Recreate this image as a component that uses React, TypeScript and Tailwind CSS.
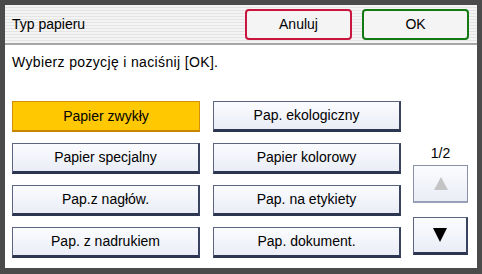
import React from "react";

const font = { fontFamily: '"Liberation Sans", Arial, sans-serif' };

function Btn({ label, active }: { label: string; active?: boolean }) {
  return (
    <div
      className={
        active
          ? "h-[31px] w-[188px] flex items-center justify-center text-[14px] text-black bg-[#ffc800] border border-[#d4900a] border-b-[2px] border-b-[#c98400]"
          : "h-[31px] w-[188px] flex items-center justify-center text-[14px] text-black bg-[linear-gradient(#fbfcff,#eaedf6)] border border-[#5b6480] border-b-[3px] border-b-[#2c3650] border-r-[2px] border-r-[#39425e]"
      }
    >
      {label}
    </div>
  );
}

export default function App() {
  return (
    <div style={font} className="w-[482px] h-[274px] bg-[#4b4b4b] pt-[5px] pl-[5px] pr-[5px] pb-[6px]">
      <div className="flex flex-col h-full bg-white">
        <div className="h-[38px] flex items-start pt-[4px] pl-[7px] pr-[8px] bg-[repeating-linear-gradient(#f4f4f4_0px,#f4f4f4_2px,#e4e4e4_2px,#e4e4e4_3px)]">
          <span className="text-[14px] text-black leading-[31px]">Typ papieru</span>
          <div className="ml-auto flex gap-[10px]">
            <div className="w-[107px] h-[31px] rounded-[4px] border-2 border-[#c9153d] bg-[#f4f4f4] flex items-center justify-center text-[14px] text-black">
              Anuluj
            </div>
            <div className="w-[107px] h-[31px] rounded-[4px] border-2 border-[#137a13] bg-[#f4f4f4] flex items-center justify-center text-[14px] text-black">
              OK
            </div>
          </div>
        </div>
        <div className="h-[2px] bg-[#a6a6a6]" />
        <div className="pl-[7px] flex flex-col">
          <div className="h-[34px] flex items-center text-[14px] text-black tracking-[0.35px]">
            Wybierz pozycję i naciśnij [OK].
          </div>
          <div className="mt-[22px] flex">
            <div className="grid grid-cols-[188px_188px] gap-x-[13px] gap-y-[11px]">
              <Btn label="Papier zwykły" active />
              <Btn label="Pap. ekologiczny" />
              <Btn label="Papier specjalny" />
              <Btn label="Papier kolorowy" />
              <Btn label="Pap.z nagłów." />
              <Btn label="Pap. na etykiety" />
              <Btn label="Pap. z nadrukiem" />
              <Btn label="Pap. dokument." />
            </div>
            <div className="ml-[12px] w-[55px] flex flex-col pt-[40px]">
              <div className="h-[24px] flex items-center justify-center text-[14px] text-black">1/2</div>
              <div className="h-[38px] bg-[linear-gradient(#fbfcff,#eaedf6)] border border-[#8a90a8] border-b-[2px] border-b-[#9aa0b8] flex items-center justify-center">
                <div className="w-0 h-0 border-l-[7px] border-r-[7px] border-b-[13px] border-l-transparent border-r-transparent border-b-[#c4c4c4]" />
              </div>
              <div className="mt-[14px] h-[38px] bg-[linear-gradient(#fbfcff,#eaedf6)] border border-[#5b6480] border-b-[3px] border-b-[#2c3650] border-r-[2px] border-r-[#39425e] flex items-center justify-center">
                <div className="w-0 h-0 border-l-[7px] border-r-[7px] border-t-[14px] border-l-transparent border-r-transparent border-t-black" />
              </div>
            </div>
          </div>
        </div>
      </div>
    </div>
  );
}
